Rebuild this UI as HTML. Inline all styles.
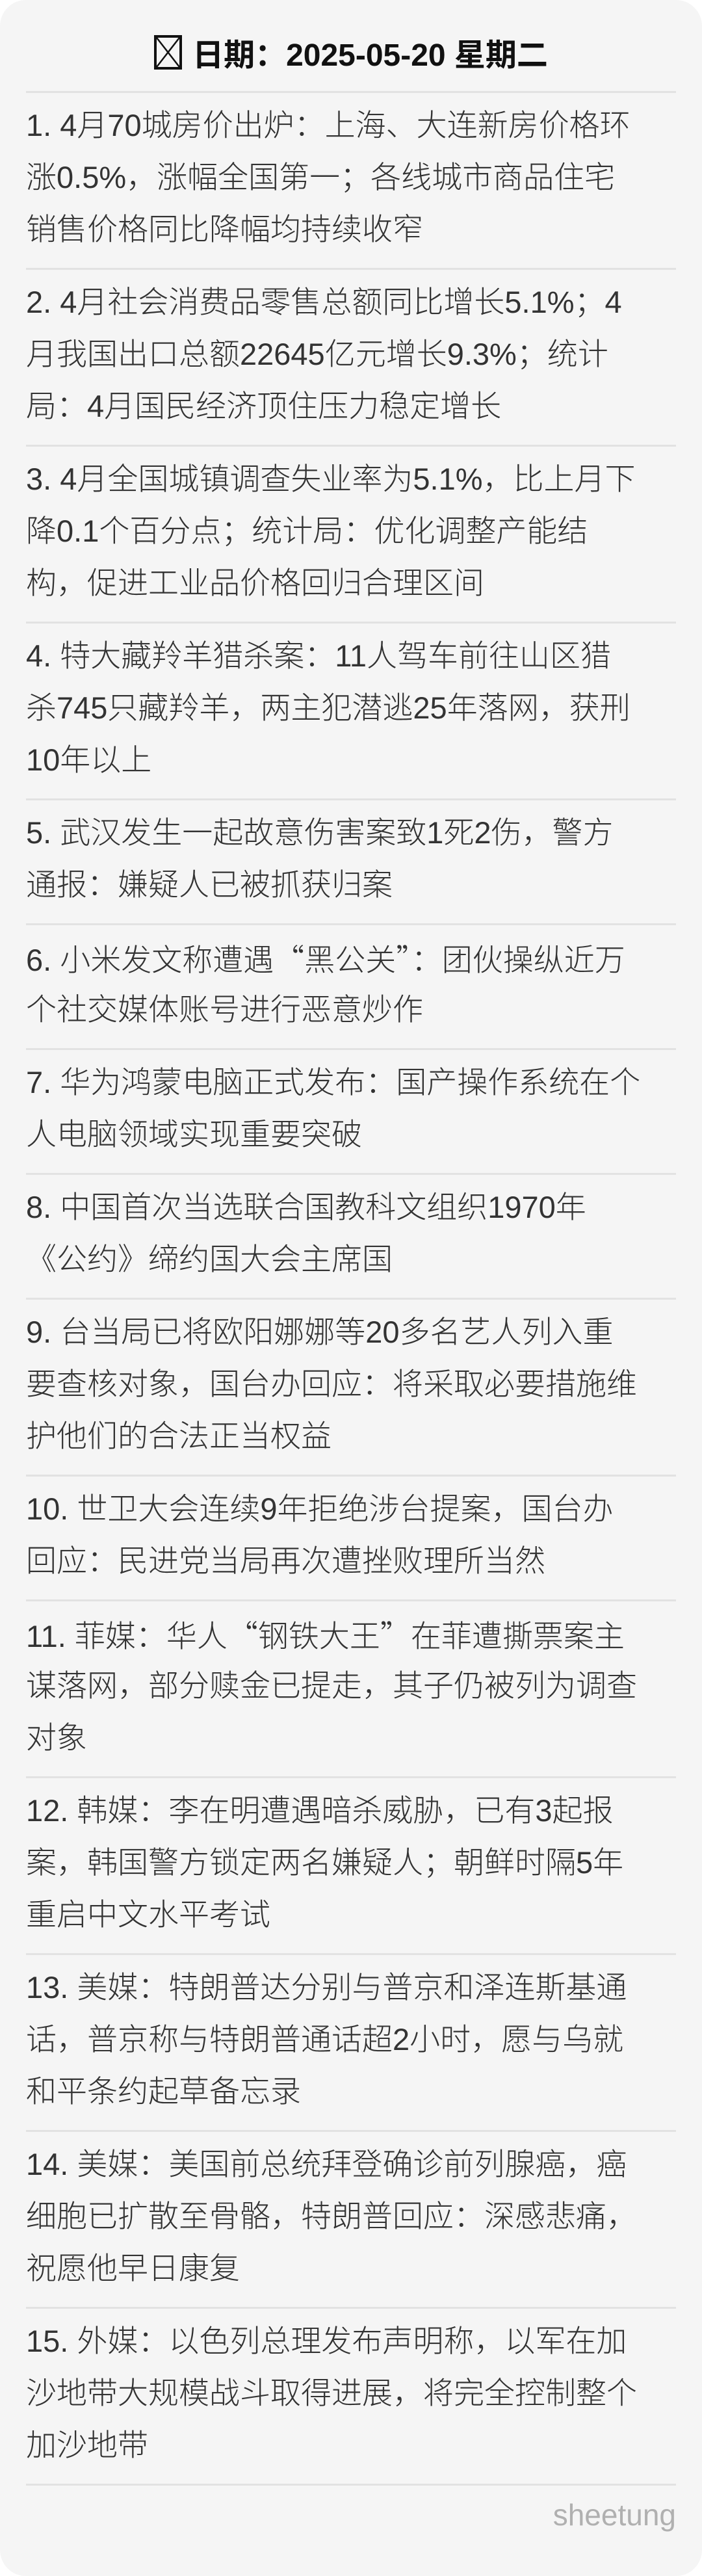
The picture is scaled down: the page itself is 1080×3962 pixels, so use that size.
<!DOCTYPE html>
<html><head><meta charset="utf-8">
<style>
html,body{margin:0;padding:0;background:#fff;}
.card{width:1080px;height:3962px;background:#f5f5f5;border-radius:40px;position:relative;overflow:hidden;font-family:"Liberation Sans","Noto Sans CJK SC",sans-serif;}
.hd{height:140px;box-sizing:border-box;padding-top:20px;display:flex;align-items:center;justify-content:center;font-size:48px;font-weight:bold;color:#111;}
.hd svg{margin-right:16px;}
.list{margin:0 40px;}
.it{border-top:3px solid #e2e2e2;padding:10px 0 19px;}
.it div{height:80px;line-height:80px;font-size:47px;color:#333;font-weight:300;white-space:nowrap;}
.q{font-family:"Noto Sans CJK SC",sans-serif;}
.end{border-top:3px solid #e2e2e2;}
.sig{position:absolute;right:40px;top:3838px;font-size:46px;color:#b0b0b0;font-weight:300;line-height:60px;}
</style></head><body>
<div class="card">
<div class="hd"><svg width="43" height="53" viewBox="0 0 43 53"><rect x="2" y="2" width="39" height="49" fill="none" stroke="#111" stroke-width="4"/><path d="M4 4L39 49M39 4L4 49" stroke="#111" stroke-width="2.5"/></svg>日期：2025-05-20 星期二</div>
<div class="list">
<div class="it"><div>1. 4月70城房价出炉：上海、大连新房价格环</div><div>涨0.5%，涨幅全国第一；各线城市商品住宅</div><div>销售价格同比降幅均持续收窄</div></div>
<div class="it"><div>2. 4月社会消费品零售总额同比增长5.1%；4</div><div>月我国出口总额22645亿元增长9.3%；统计</div><div>局：4月国民经济顶住压力稳定增长</div></div>
<div class="it"><div>3. 4月全国城镇调查失业率为5.1%，比上月下</div><div>降0.1个百分点；统计局：优化调整产能结</div><div>构，促进工业品价格回归合理区间</div></div>
<div class="it"><div>4. 特大藏羚羊猎杀案：11人驾车前往山区猎</div><div>杀745只藏羚羊，两主犯潜逃25年落网，获刑</div><div>10年以上</div></div>
<div class="it"><div>5. 武汉发生一起故意伤害案致1死2伤，警方</div><div>通报：嫌疑人已被抓获归案</div></div>
<div class="it"><div>6. 小米发文称遭遇<span class="q">“</span>黑公关<span class="q">”</span>：团伙操纵近万</div><div>个社交媒体账号进行恶意炒作</div></div>
<div class="it"><div>7. 华为鸿蒙电脑正式发布：国产操作系统在个</div><div>人电脑领域实现重要突破</div></div>
<div class="it"><div>8. 中国首次当选联合国教科文组织1970年</div><div>《公约》缔约国大会主席国</div></div>
<div class="it"><div>9. 台当局已将欧阳娜娜等20多名艺人列入重</div><div>要查核对象，国台办回应：将采取必要措施维</div><div>护他们的合法正当权益</div></div>
<div class="it"><div>10. 世卫大会连续9年拒绝涉台提案，国台办</div><div>回应：民进党当局再次遭挫败理所当然</div></div>
<div class="it"><div>11. 菲媒：华人<span class="q">“</span>钢铁大王<span class="q">”</span>在菲遭撕票案主</div><div>谋落网，部分赎金已提走，其子仍被列为调查</div><div>对象</div></div>
<div class="it"><div>12. 韩媒：李在明遭遇暗杀威胁，已有3起报</div><div>案，韩国警方锁定两名嫌疑人；朝鲜时隔5年</div><div>重启中文水平考试</div></div>
<div class="it"><div>13. 美媒：特朗普达分别与普京和泽连斯基通</div><div>话，普京称与特朗普通话超2小时，愿与乌就</div><div>和平条约起草备忘录</div></div>
<div class="it"><div>14. 美媒：美国前总统拜登确诊前列腺癌，癌</div><div>细胞已扩散至骨骼，特朗普回应：深感悲痛，</div><div>祝愿他早日康复</div></div>
<div class="it"><div>15. 外媒：以色列总理发布声明称，以军在加</div><div>沙地带大规模战斗取得进展，将完全控制整个</div><div>加沙地带</div></div>
<div class="end"></div>
</div>
<div class="sig">sheetung</div>
</div>
</body></html>
